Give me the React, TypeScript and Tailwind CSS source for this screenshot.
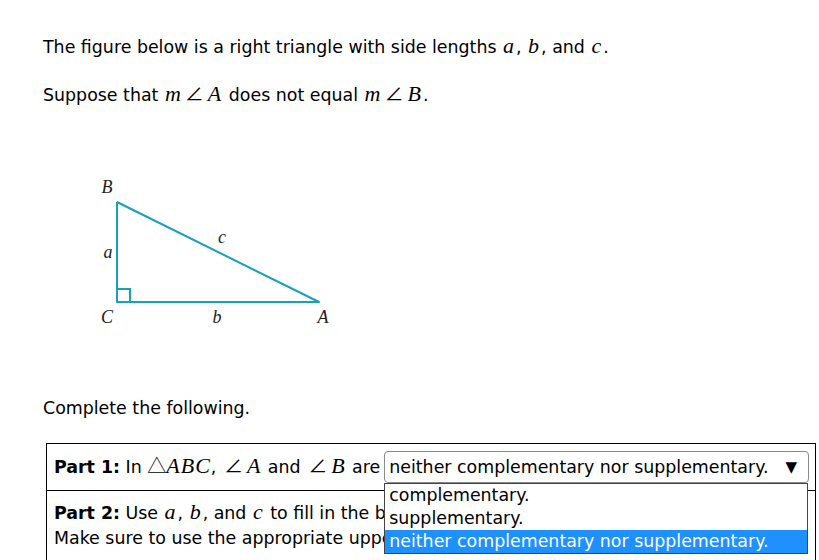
import React from 'react'

const sans = { fontFamily: '"DejaVu Sans", Verdana, sans-serif' }

function M({ children, wide }: { children: React.ReactNode; wide?: boolean }) {
  return (
    <span
      className={
        wide
          ? 'italic text-[22px] leading-none tracking-[1px] [font-family:"Liberation_Serif",serif]'
          : 'italic text-[22px] leading-none pl-[1px] pr-[2px] [font-family:"Liberation_Serif",serif]'
      }
    >
      {children}
    </span>
  )
}

function Ang() {
  return (
    <span className="not-italic text-[19px] leading-none [font-family:'Noto_Sans_CJK_JP',sans-serif] ml-[2px] mr-[3px]">∠</span>
  )
}

function Triangle() {
  const teal = '#17a0b9'
  return (
    <svg width="320" height="170" viewBox="0 0 320 170" className="block">
      <polyline points="74,32 74,132 276,132 74,32" fill="none" stroke={teal} strokeWidth="2" strokeLinejoin="round" />
      <polyline points="74,119 87,119 87,132" fill="none" stroke={teal} strokeWidth="2" />
      <g fontFamily="'Liberation Serif', serif" fontStyle="italic" fontSize="18" fill="#222" textAnchor="middle">
        <text x="64" y="23">B</text>
        <text x="65" y="88">a</text>
        <text x="179" y="73">c</text>
        <text x="64" y="153">C</text>
        <text x="174" y="153">b</text>
        <text x="280" y="153">A</text>
      </g>
    </svg>
  )
}

const options = ['complementary.', 'supplementary.', 'neither complementary nor supplementary.']

export default function App() {
  return (
    <div className="min-h-[560px] bg-white text-[17.4px] text-black px-[43px] pt-[35px]" style={sans}>
      <p className="leading-[24px]">
        The figure below is a right triangle with side lengths <M>a</M>, <M>b</M>, and <M>c</M>.
      </p>
      <p className="leading-[24px] mt-[24px]">
        Suppose that <M>m</M><Ang /><M>A</M> does not equal <M>m</M><Ang /><M>B</M>.
      </p>

      <div className="mt-[63px]">
        <Triangle />
      </div>

      <p className="leading-[24px] mt-[56px]">Complete the following.</p>

      <div className="ml-[3px] mt-[23px] w-[770px] border border-black">
        <div className="flex items-center border-b border-black pl-[7px] pr-[6px] py-[7px]">
          <span className="leading-[24px] whitespace-nowrap">
            <b>Part 1:</b> In <span className="text-[19px] leading-none [font-family:'Noto_Sans_CJK_JP',sans-serif]">△</span><M wide>ABC</M>, <Ang /><M>A</M> and <Ang /><M>B</M> are
          </span>
          <div className="relative ml-[4px] flex-1">
            <div className="flex h-[32px] items-center justify-between rounded-[4px] border border-[#8a8a8a] pl-[4px] pr-[11px]">
              <span>neither complementary nor supplementary.</span>
              <span className="text-[15px]">▼</span>
            </div>
            <ul className="absolute left-0 top-full z-10 w-[424px] border border-[#444] bg-white">
              {options.map((o, i) => (
                <li
                  key={o}
                  className={
                    'h-[23px] pl-[4px] leading-[23px] whitespace-nowrap ' +
                    (i === 2 ? 'bg-[#1e90ff] text-white' : 'text-black')
                  }
                >
                  {o}
                </li>
              ))}
            </ul>
          </div>
        </div>
        <div className="pl-[7px] pr-[6px] pt-[10px] pb-[12px] leading-[25px]">
          <p className="whitespace-nowrap">
            <b>Part 2:</b> Use <M>a</M>, <M>b</M>, and <M>c</M> to fill in the blanks below.
          </p>
          <p className="whitespace-nowrap">Make sure to use the appropriate upper case.</p>
        </div>
      </div>
    </div>
  )
}
